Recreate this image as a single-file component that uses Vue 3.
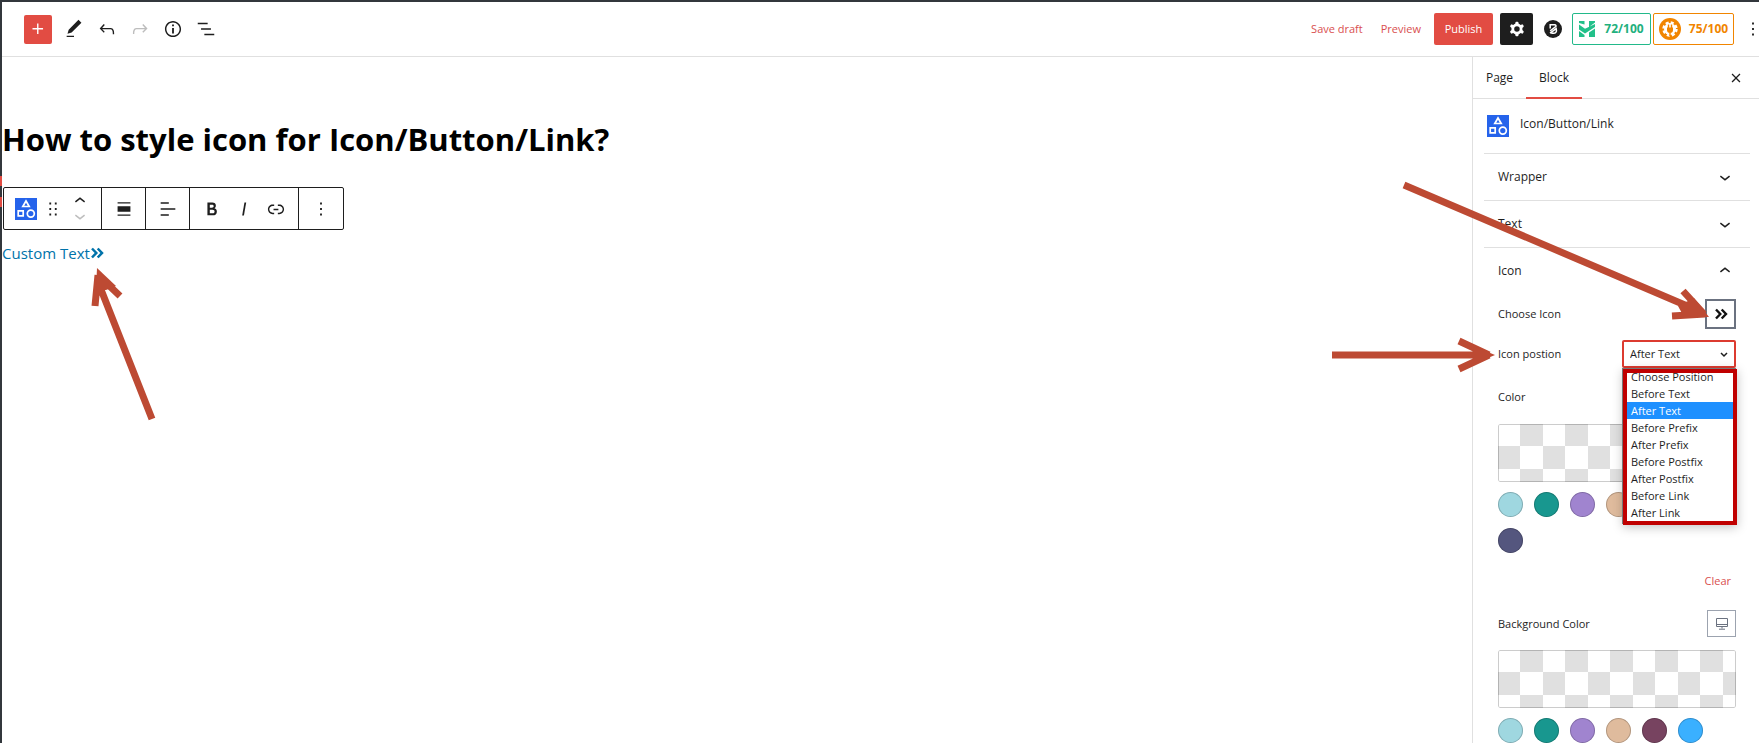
<script setup>
import { ref } from 'vue'

const icons = {
  plus: 'M11 12.5V17.5H12.5V12.5H17.5V11H12.5V6H11V11H6V12.5H11Z',
  pencil: 'M20.1 5.1L16.9 2 6.2 12.7l-1.3 4.4 4.5-1.3L20.1 5.1zM4 20.8h8v-1.5H4v1.5z',
  undo: 'M18.3 11.7c-.6-.6-1.4-.9-2.3-.9H6.7l2.9-3.3-1.1-1-4.5 5L8.5 16l1-1-2.7-2.7H16c.5 0 .9.2 1.3.5 1 1 1 3.4 1 4.5v.3h1.5v-.2c0-1.5 0-4.3-1.5-5.7z',
  redo: 'M15.6 6.5l-1.1 1 2.9 3.3H8c-.9 0-1.7.3-2.3.9-1.4 1.5-1.4 4.2-1.4 5.6v.2h1.5v-.3c0-1.1 0-3.5 1-4.5.3-.3.7-.5 1.3-.5h9.2L14.5 15l1.1 1.1 4.6-4.6-4.6-5z',
  info: 'M12 3.2c-4.8 0-8.8 3.9-8.8 8.8 0 4.8 3.9 8.8 8.8 8.8 4.8 0 8.8-3.9 8.8-8.8 0-4.8-4-8.8-8.8-8.8zm0 16c-4 0-7.2-3.3-7.2-7.2C4.8 8 8 4.8 12 4.8s7.2 3.3 7.2 7.2c0 4-3.2 7.2-7.2 7.2zM11 17h2v-6h-2v6zm0-8h2V7h-2v2z',
  list: 'M13.8 5.2H3v1.5h10.8V5.2zm-3.6 12v1.5H21v-1.5H10.2zm7.2-6H6.6v1.5h10.8v-1.5z',
  cog: 'M10.289 4.836A1 1 0 0111.275 4h1.306a1 1 0 01.987.836l.244 1.466c.787.26 1.503.679 2.108 1.218l1.393-.522a1 1 0 011.216.437l.653 1.13a1 1 0 01-.23 1.273l-1.148.944a6.025 6.025 0 010 2.435l1.149.946a1 1 0 01.23 1.272l-.653 1.13a1 1 0 01-1.216.437l-1.394-.522c-.605.54-1.32.958-2.108 1.218l-.244 1.466a1 1 0 01-.987.836h-1.306a1 1 0 01-.986-.836l-.244-1.466a5.995 5.995 0 01-2.108-1.218l-1.394.522a1 1 0 01-1.217-.436l-.653-1.131a1 1 0 01.23-1.272l1.149-.946a6.026 6.026 0 010-2.435l-1.148-.944a1 1 0 01-.23-1.272l.653-1.131a1 1 0 011.217-.437l1.393.522a5.994 5.994 0 012.108-1.218l.244-1.466zM14.929 12a3 3 0 11-6 0 3 3 0 016 0z',
  down: 'M17.5 11.6L12 16l-5.5-4.4.9-1.2L12 14l4.5-3.6 1 1.2z',
  up: 'M6.5 12.4L12 8l5.5 4.4-.9 1.2L12 10l-4.5 3.6-1-1.2z',
  close: 'M12 13.06l4.2 4.2 1.1-1.1L13.1 12l4.2-4.2-1.1-1.1-4.2 4.2-4.2-4.2-1.1 1.1 4.2 4.2-4.2 4.2 1.1 1.1z',
  drag: 'M8 7h2V5H8v2zm0 6h2v-2H8v2zm0 6h2v-2H8v2zm6-14v2h2V5h-2zm0 8h2v-2h-2v2zm0 6h2v-2h-2v2z',
  more: 'M13 19h-2v-2h2v2zm0-6h-2v-2h2v2zm0-6h-2V5h2v2z',
  align: 'M5 4.6h14v1.5H5zM5 9h14v6H5zM5 17.9h14v1.5H5z',
  textAlign: 'M4 19.3h8.9v-1.5H4v1.5zm8.9-14.6H4v1.5h8.9V4.7zM4 11.2v1.5h16v-1.5H4z',
  bold: 'M14.7 11.3c1-.6 1.5-1.6 1.5-3 0-2.3-1.3-3.4-4-3.4H7v14h5.8c1.4 0 2.5-.3 3.3-1 .8-.7 1.2-1.7 1.2-2.9.1-1.9-.8-3.1-2.6-3.7zm-5.1-4h2.3c.6 0 1.1.1 1.4.4.3.3.5.7.5 1.2s-.2 1-.5 1.2c-.3.3-.8.4-1.4.4H9.6V7.3zm4.6 9c-.4.3-1 .4-1.7.4H9.6v-3.9h2.9c.7 0 1.3.2 1.7.5.4.3.6.8.6 1.5s-.2 1.2-.6 1.5z',
  italic: 'M12.5 5L10 19h1.9l2.5-14z',
  link: 'M15.6 7.2H14v1.5h1.6c2 0 3.7 1.7 3.7 3.7s-1.7 3.7-3.7 3.7H14v1.5h1.6c2.8 0 5.2-2.3 5.2-5.2 0-2.9-2.3-5.2-5.2-5.2zM4.7 12.4c0-2 1.7-3.7 3.7-3.7H10V7.2H8.4c-2.9 0-5.2 2.3-5.2 5.2 0 2.9 2.3 5.2 5.2 5.2H10v-1.5H8.4c-2 0-3.7-1.7-3.7-3.7zm4.6.9h5.3v-1.5H9.3v1.5z',
}

const tools = [
  { name: 'Tools', icon: 'pencil' },
  { name: 'Undo', icon: 'undo' },
  { name: 'Redo', icon: 'redo', disabled: true },
  { name: 'Details', icon: 'info' },
  { name: 'List view', icon: 'list' },
]

const positions = [
  'Choose Position', 'Before Text', 'After Text', 'Before Prefix', 'After Prefix',
  'Before Postfix', 'After Postfix', 'Before Link', 'After Link',
]
const position = ref('After Text')

const swatches = ['aqua', 'teal', 'violet', 'sand', 'plum', 'sky', 'navy']
</script>

<template>
  <div class="editor">
    <header class="topbar">
      <div class="tools">
        <button class="inserter" aria-label="Add block">
          <svg class="icon" viewBox="0 0 24 24"><path :d="icons.plus" /></svg>
        </button>
        <button v-for="t in tools" :key="t.name" class="tool" :aria-label="t.name" :disabled="t.disabled">
          <svg class="icon" viewBox="0 0 24 24"><path :d="icons[t.icon]" /></svg>
        </button>
      </div>
      <div class="actions">
        <button class="text-action">Save draft</button>
        <button class="text-action">Preview</button>
        <button class="publish">Publish</button>
        <button class="settings" aria-label="Settings">
          <svg class="icon" viewBox="0 0 24 24"><path fill-rule="evenodd" :d="icons.cog" /></svg>
        </button>
        <button class="brand" aria-label="Blocks settings">
          <svg width="18" height="18" viewBox="0 0 18 18">
            <circle cx="9" cy="9" r="9" fill="#1e1e1e" />
            <path d="M6.2 8.6V4.8H10.6Q12.6 5 11.8 6.6L6.2 10.8" fill="none" stroke="#fff" stroke-width="1.5" />
            <path d="M6 13.2L12.2 8.6Q13.2 13.2 10 13.2H7.4" fill="none" stroke="#fff" stroke-width="1.5" />
          </svg>
        </button>
        <button class="score score-green">
          <svg width="16" height="16" viewBox="0 0 16 16">
            <path d="M0 0h5.5v3.5L0 2zM10 0h6v1.6L10 6zM0 3.4l6 4.4L16 3v3L6 12.6 0 8.4zM0 10l5.5 4v2H0zM16 7.6V16h-6v-4.4z" fill="#22c08a" />
          </svg>
          <span>72/100</span>
        </button>
        <button class="score score-orange">
          <svg width="22" height="22" viewBox="0 0 22 22">
            <circle cx="11" cy="11" r="11" fill="#f18500" />
            <circle cx="11" cy="11" r="6" fill="#fff" />
            <circle cx="11" cy="11" r="6.5" fill="none" stroke="#fff" stroke-width="2.4" stroke-dasharray="3 2.1" />
            <path d="M8 9.5h6v2.5a3 3 0 0 1-6 0zM8.8 6.5h1.4v3H8.8zM11.8 6.5h1.4v3h-1.4zM10.3 14h1.4v4h-1.4z" fill="#f18500" />
          </svg>
          <span>75/100</span>
        </button>
        <button class="more" aria-label="Options">
          <svg class="icon" viewBox="0 0 24 24"><path :d="icons.more" /></svg>
        </button>
      </div>
    </header>

    <div class="body">
      <span class="menu-mark mark-first"></span>
      <span class="menu-mark mark-second"></span>
      <main class="canvas">
        <h1 class="title">How to style icon for Icon/Button/Link?</h1>
        <div class="block-toolbar" role="toolbar" aria-label="Block tools">
          <div class="group group-block">
            <button aria-label="Icon/Button/Link">
              <svg class="block-logo" viewBox="0 0 22 22">
                <rect width="22" height="22" fill="#2563eb" />
                <path d="M11 3L14.2 8.5H7.8z M3.2 12.8h5v5h-5z" fill="none" stroke="#fff" stroke-width="1.7" />
                <circle cx="15.8" cy="15.6" r="3.5" fill="none" stroke="#fff" stroke-width="1.7" />
              </svg>
            </button>
            <button aria-label="Drag"><svg class="icon" viewBox="0 0 24 24"><path :d="icons.drag" /></svg></button>
            <div class="movers">
              <button aria-label="Move up"><svg class="icon" viewBox="0 0 24 24"><path :d="icons.up" /></svg></button>
              <button aria-label="Move down" disabled><svg class="icon" viewBox="0 0 24 24"><path :d="icons.down" /></svg></button>
            </div>
          </div>
          <div class="group">
            <button aria-label="Align"><svg class="icon" viewBox="0 0 24 24"><path :d="icons.align" /></svg></button>
          </div>
          <div class="group">
            <button aria-label="Align text"><svg class="icon" viewBox="0 0 24 24"><path :d="icons.textAlign" /></svg></button>
          </div>
          <div class="group group-format">
            <button aria-label="Bold"><svg class="icon" viewBox="0 0 24 24"><path :d="icons.bold" /></svg></button>
            <button aria-label="Italic"><svg class="icon" viewBox="0 0 24 24"><path :d="icons.italic" /></svg></button>
            <button aria-label="Link"><svg class="icon" viewBox="0 0 24 24"><path :d="icons.link" /></svg></button>
          </div>
          <div class="group group-more">
            <button aria-label="More options"><svg class="icon" viewBox="0 0 24 24"><path :d="icons.more" /></svg></button>
          </div>
        </div>
        <a class="custom-link" href="#">Custom Text<svg width="14" height="12" viewBox="0 0 14 12"><path d="M2 1.5L6.3 6 2 10.5M7.7 1.5L12 6 7.7 10.5" fill="none" stroke="currentColor" stroke-width="2.5" /></svg></a>
        <svg class="arrow arrow-link" width="70" height="160" viewBox="0 0 70 160">
          <path d="M62 151L10 19M5 38L8 7M30 28L8 7" />
          <path class="head" d="M7 0L26 18 16 22 6 22z" />
        </svg>
      </main>

      <aside class="sidebar">
        <div class="tabs">
          <button class="tab">Page</button>
          <button class="tab active">Block</button>
          <button class="close" aria-label="Close settings"><svg class="icon" viewBox="0 0 24 24"><path :d="icons.close" /></svg></button>
        </div>
        <div class="card">
          <svg class="block-logo" viewBox="0 0 22 22">
            <rect width="22" height="22" fill="#2563eb" />
            <path d="M11 3L14.2 8.5H7.8z M3.2 12.8h5v5h-5z" fill="none" stroke="#fff" stroke-width="1.7" />
            <circle cx="15.8" cy="15.6" r="3.5" fill="none" stroke="#fff" stroke-width="1.7" />
          </svg>
          <h2>Icon/Button/Link</h2>
        </div>
        <div class="panels">
          <button class="panel-title">Wrapper<svg class="icon" viewBox="0 0 24 24"><path :d="icons.down" /></svg></button>
          <button class="panel-title">Text<svg class="icon" viewBox="0 0 24 24"><path :d="icons.down" /></svg></button>
          <button class="panel-title">Icon<svg class="icon" viewBox="0 0 24 24"><path :d="icons.up" /></svg></button>
          <div class="panel-body">
            <div class="row row-choose">
              <span>Choose Icon</span>
              <button class="choose" aria-label="Choose Icon">
                <svg width="14" height="12" viewBox="0 0 14 12"><path d="M2 1.5L6.3 6 2 10.5M7.7 1.5L12 6 7.7 10.5" fill="none" stroke="currentColor" stroke-width="2.4" /></svg>
              </button>
            </div>
            <div class="row row-position">
              <label for="icon-position">Icon postion</label>
              <div class="select-wrap">
                <select id="icon-position" v-model="position">
                  <option v-for="p in positions" :key="p">{{ p }}</option>
                </select>
                <svg class="caret" width="8" height="6" viewBox="0 0 8 6"><path d="M1 1l3 3 3-3" fill="none" stroke="#1e1e1e" stroke-width="1.5" /></svg>
                <ul class="options" role="listbox" aria-label="Icon postion">
                  <li v-for="p in positions" :key="p" role="option" :aria-selected="p === position" :class="{ selected: p === position }" @click="position = p">{{ p }}</li>
                </ul>
              </div>
            </div>
            <div class="row row-color"><span>Color</span></div>
            <button class="checker" aria-label="Custom color"></button>
            <div class="swatches">
              <button v-for="s in swatches" :key="s" class="swatch" :class="s" :aria-label="s"></button>
            </div>
            <div class="clear-row"><button class="clear">Clear</button></div>
            <div class="row row-bg">
              <span>Background Color</span>
              <button class="device" aria-label="Desktop">
                <svg width="12" height="12" viewBox="0 0 12 12" fill="none" stroke="#6b7280"><path d="M.5.5h11v8H.5zM.5 6.5h11M6 8.5v2M3 11.2h6" /></svg>
              </button>
            </div>
            <button class="checker" aria-label="Custom background color"></button>
            <div class="swatches">
              <button v-for="s in swatches" :key="s" class="swatch" :class="s" :aria-label="s"></button>
            </div>
          </div>
        </div>
      </aside>
      <svg class="arrow arrow-side" width="427" height="210" viewBox="0 0 427 210">
        <path d="M72 9L367 135M351 115L372 138M340 140L373 138" />
        <path class="head" d="M377 141L362 122 346 130 352 141z" />
        <path d="M0 179H150M127 165L157 179M127 193L157 179" />
        <path class="head" d="M163 179L144 171V187z" />
      </svg>
    </div>
  </div>
</template>

<style>
body { margin: 0; background: #fff; }
</style>

<style scoped>
.editor {
  box-sizing: border-box;
  height: 100vh;
  display: flex;
  flex-direction: column;
  overflow: hidden;
  padding: 2px 0 0 2px;
  background: #32373c;
  font: 11px/16px "Segoe UI", "Open Sans", "Noto Sans", sans-serif;
  color: #1e1e1e;
}
button {
  display: flex;
  align-items: center;
  justify-content: center;
  padding: 0;
  border: 0;
  background: none;
  font: inherit;
  color: inherit;
  cursor: pointer;
}
.icon { width: 22px; height: 22px; fill: currentColor; flex: none; }
.topbar {
  flex: none;
  display: flex;
  justify-content: space-between;
  align-items: center;
  height: 55px;
  box-sizing: border-box;
  padding: 0 0 0 22px;
  border-bottom: 1px solid #e0e0e0;
  background: #fff;
}
.tools, .actions { display: flex; align-items: center; }
.inserter { width: 28px; height: 29px; margin-right: 5px; border-radius: 2px; background: #e24c43; color: #fff; }
.tool { width: 33px; height: 32px; }
.tool:disabled, .movers button:disabled { color: #bdbdbd; }
.text-action { margin-right: 18px; color: #d94f4f; }
.text-action + .publish { margin-left: -5px; }
.publish { width: 59px; height: 32px; border-radius: 2px; background: #e24c43; color: #fff; }
.settings { width: 33px; height: 32px; margin-left: 7px; border-radius: 2px; background: #1e1e1e; color: #fff; }
.brand { width: 39px; height: 32px; }
.score { box-sizing: border-box; height: 32px; border: 1px solid; border-radius: 2px; font-size: 12px; font-weight: 700; }
.score-green { width: 79px; gap: 9px; color: #22b07d; border-color: #22b98a; }
.score-orange { width: 81px; gap: 8px; margin-left: 2px; color: #f18500; }
.more { width: 25px; height: 32px; overflow: hidden; padding-left: 12px; box-sizing: border-box; }
.body { position: relative; flex: 1; min-height: 0; display: flex; background: #fff; }
.menu-mark { position: absolute; left: -2px; width: 2px; height: 10px; background: #e24c43; }
.mark-first { top: 119px; }
.mark-second { top: 140px; }
.canvas { position: relative; flex: 1; min-width: 0; padding: 61px 0 0; }
.title { margin: 0; font-size: 31px; line-height: 42px; font-weight: 700; color: #000; }
.block-toolbar {
  display: flex;
  width: max-content;
  height: 43px;
  box-sizing: border-box;
  margin: 27px 0 0 1px;
  border: 1px solid #1e1e1e;
  border-radius: 2px;
}
.group { display: flex; align-items: center; justify-content: center; width: 43px; border-left: 1px solid #1e1e1e; }
.group-block { width: 97px; border-left: 0; gap: 5px; }
.group-format { width: 108px; gap: 10px; }
.group-more { width: 44px; }
.block-logo { width: 22px; height: 22px; flex: none; }
.movers { display: flex; flex-direction: column; }
.movers button { height: 15px; overflow: hidden; }
.custom-link { display: inline-flex; align-items: center; margin-top: 11px; font-size: 15px; line-height: 24px; color: #0073aa; text-decoration: none; }
.sidebar {
  flex: none;
  width: 287px;
  box-sizing: border-box;
  border-left: 1px solid #e0e0e0;
  overflow: hidden;
}
.tabs { display: flex; height: 42px; box-sizing: border-box; border-bottom: 1px solid #e0e0e0; font-size: 12px; }
.tab { width: 53px; height: 42px; }
.tab.active { width: 56px; box-shadow: inset 0 -2px #e24c43; }
.close { margin-left: auto; width: 46px; }
.close .icon { width: 20px; height: 20px; }
.card { display: flex; gap: 11px; height: 54px; box-sizing: border-box; padding: 16px 14px 0; }
.card h2 { margin: 1px 0 0; font-size: 12px; line-height: 16px; font-weight: 400; }
.panels { padding: 0 9px 0 11px; }
.panel-title {
  width: 100%;
  height: 47px;
  box-sizing: border-box;
  justify-content: space-between;
  padding: 0 14px;
  border-top: 1px solid #e0e0e0;
  font-size: 12px;
}
.panel-body { padding: 0 14px; }
.row { display: flex; align-items: center; justify-content: space-between; }
.row-choose { height: 30px; margin-top: 5px; }
.choose { width: 31px; height: 30px; border: 2px solid #6b7280; box-sizing: border-box; color: #111; }
.row-position { height: 28px; margin-top: 11px; }
.select-wrap { position: relative; width: 114px; height: 28px; }
select {
  width: 100%;
  height: 100%;
  box-sizing: border-box;
  appearance: none;
  padding: 0 20px 0 6px;
  border: 2px solid #dc3b30;
  border-radius: 2px;
  background: #fff;
  font: inherit;
  color: inherit;
}
.caret { position: absolute; right: 8px; top: 12px; pointer-events: none; }
.options {
  position: absolute;
  z-index: 2;
  top: 29px;
  left: 1px;
  width: 114px;
  box-sizing: border-box;
  margin: 0;
  padding: 4px;
  list-style: none;
  background: #fff;
  box-shadow: -1px -1px 0 #777, 0 2px 10px rgba(0, 0, 0, 0.25);
}
.options::after { content: ""; position: absolute; inset: 0; border: 4px solid #c00000; pointer-events: none; }
.options li { height: 17px; padding-left: 4px; line-height: 17px; white-space: nowrap; }
.options li:first-child { height: 12px; line-height: 8px; }
.options .selected { background: #1e90ff; color: #fff; }
.row-color { height: 16px; margin-top: 21px; }
.checker {
  width: 100%;
  height: 58px;
  margin-top: 19px;
  border-radius: 2px;
  box-shadow: inset 0 0 0 1px rgba(0, 0, 0, 0.2);
  background-image:
    repeating-linear-gradient(45deg, #e0e0e0 25%, transparent 0, transparent 75%, #e0e0e0 0, #e0e0e0),
    repeating-linear-gradient(45deg, #e0e0e0 25%, transparent 0, transparent 75%, #e0e0e0 0, #e0e0e0);
  background-position: 0 0, 22px 22px;
  background-size: 45px 45px;
}
.swatches { display: flex; flex-wrap: wrap; gap: 11px; margin-top: 10px; }
.swatch { width: 25px; height: 25px; border-radius: 50%; box-shadow: inset 0 0 0 1px rgba(0, 0, 0, 0.2); }
.aqua { background: #9fd7e0; }
.teal { background: #18978f; }
.violet { background: #a084cf; }
.sand { background: #dfbb9d; }
.plum { background: #774360; }
.sky { background: #3ab0ff; }
.navy { background: #54567e; }
.clear-row { display: flex; justify-content: flex-end; margin-top: 20px; padding-right: 5px; }
.clear { height: 16px; color: #d94f4f; }
.row-bg { height: 27px; margin-top: 21px; }
.row-bg + .checker { margin-top: 13px; }
.device { width: 29px; height: 27px; border: 1px solid #9ca3af; box-sizing: border-box; }
.arrow { position: absolute; pointer-events: none; fill: none; stroke: #bd4a33; stroke-width: 7; }
.arrow .head { fill: #bd4a33; stroke: none; }
.arrow-link { left: 88px; top: 211px; }
.arrow-side { right: 0; top: 119px; z-index: 1; }
</style>
